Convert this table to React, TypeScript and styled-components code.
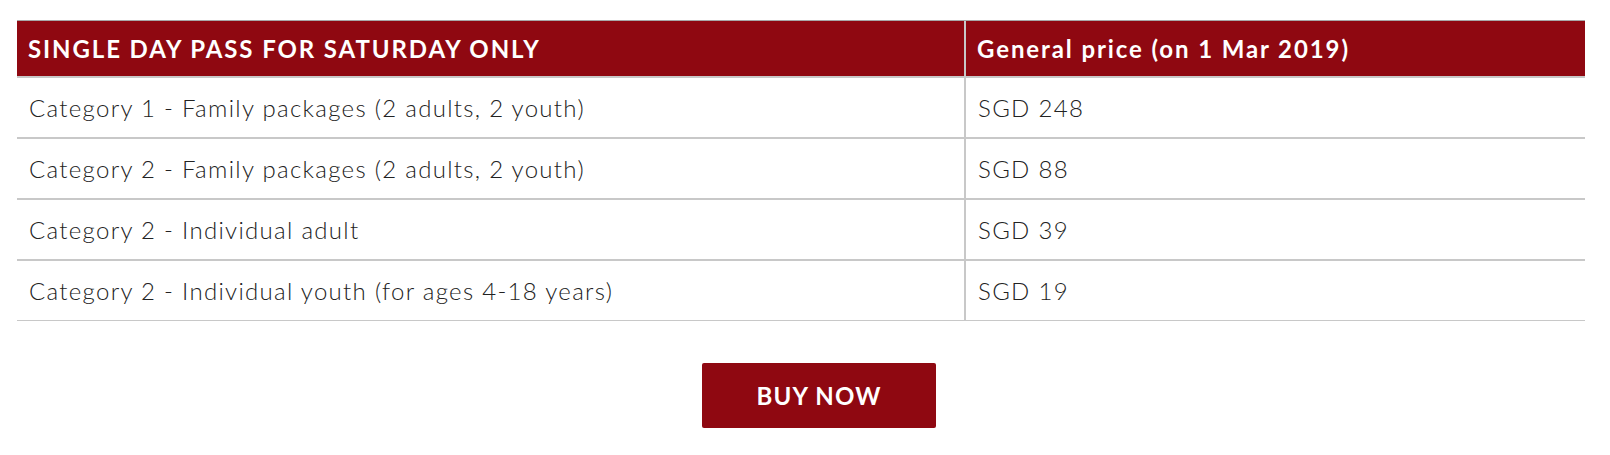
import React from "react";
import styled, { createGlobalStyle } from "styled-components";

const Global = createGlobalStyle`
  html, body { margin: 0; padding: 0; background: #fff; }
  body { font-family: Lato, "Noto Sans", sans-serif; }
`;

const Page = styled.div`
  padding: 20px 0 0 17px;
  width: 1568px;
`;

const Table = styled.div`
  display: grid;
  grid-template-columns: 947px 2px 619px;
  border-top: 1px solid #a8a8a8;
`;

const HeadCell = styled.div`
  background: #8f0811;
  color: #fff;
  font-weight: 700;
  font-size: 24px;
  letter-spacing: 1.9px;
  height: 55px;
  display: flex;
  align-items: center;
  padding-left: 11px;
  border-bottom: 2px solid #c8c8c8;
`;

const Divider = styled.div`
  background: #c8c8c8;
`;

const Cell = styled.div<{ $last?: boolean }>`
  color: #222;
  font-weight: 300;
  font-size: 24px;
  letter-spacing: 1.3px;
  height: 59px;
  display: flex;
  align-items: center;
  padding-left: 12px;
  border-bottom: ${(p) => (p.$last ? "1px" : "2px")} solid #c8c8c8;
`;

const ButtonRow = styled.div`
  padding: 42px 0 0 685px;
`;

const BuyButton = styled.button`
  width: 234px;
  height: 65px;
  background: #8f0811;
  color: #fff;
  border: none;
  border-radius: 2px;
  font-family: Lato, "Noto Sans", sans-serif;
  font-weight: 700;
  font-size: 24px;
  letter-spacing: 1.2px;
  cursor: pointer;
`;

const rows = [
  ["Category 1 - Family packages (2 adults, 2 youth)", "SGD 248"],
  ["Category 2 - Family packages (2 adults, 2 youth)", "SGD 88"],
  ["Category 2 - Individual adult", "SGD 39"],
  ["Category 2 - Individual youth (for ages 4-18 years)", "SGD 19"],
];

export default function App() {
  return (
    <Page>
      <Global />
      <Table>
        <HeadCell>SINGLE DAY PASS FOR SATURDAY ONLY</HeadCell>
        <Divider />
        <HeadCell>General price (on 1 Mar 2019)</HeadCell>
        {rows.map(([name, price], i) => {
          const last = i === rows.length - 1;
          return (
            <React.Fragment key={name}>
              <Cell $last={last}>{name}</Cell>
              <Divider />
              <Cell $last={last}>{price}</Cell>
            </React.Fragment>
          );
        })}
      </Table>
      <ButtonRow>
        <BuyButton>BUY NOW</BuyButton>
      </ButtonRow>
    </Page>
  );
}
